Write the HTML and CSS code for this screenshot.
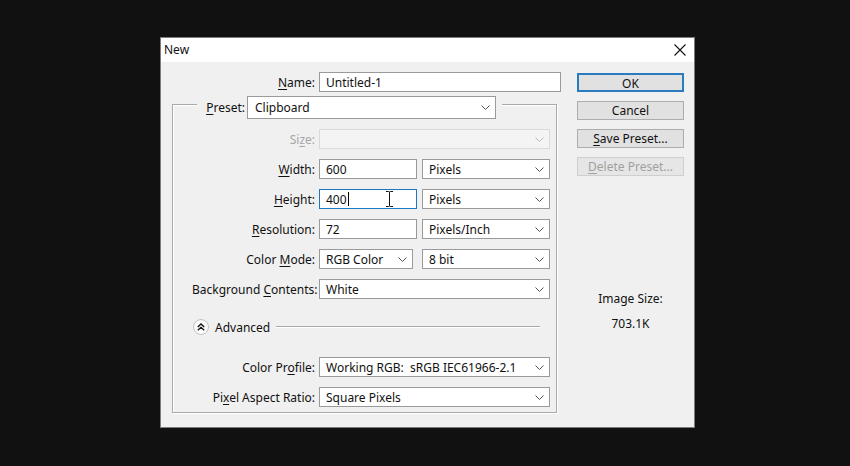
FILE: index.html
```html
<!DOCTYPE html>
<html lang="en">
<head>
    <meta charset="UTF-8">
    <title>New</title>
    <link rel="stylesheet" href="styles.css">
</head>
<body>
    <div class="dialog">
        <div class="titlebar">
            <span>New</span>
            <svg class="close" width="12" height="12" viewBox="0 0 12 12"><path d="M0.5 0.5L11.5 11.5M11.5 0.5L0.5 11.5" stroke="#111" stroke-width="1.1"/></svg>
        </div>

        <div class="dialog-body">
            <div class="form">
                <div class="row name-row">
                    <label class="lbl"><u>N</u>ame:</label>
                    <div class="field name-field">Untitled-1</div>
                </div>

                <div class="group">
                    <div class="group-head">
                        <label class="head-lbl"><u>P</u>reset:</label>
                        <div class="select preset">Clipboard<svg class="chev" width="9" height="5" viewBox="0 0 9 5"><path d="M0.5 0.5L4.5 4.5L8.5 0.5" fill="none" stroke="#555"/></svg></div>
                    </div>

                    <div class="row">
                        <label class="lbl disabled">Si<u>z</u>e:</label>
                        <div class="select full off"><span></span><svg class="chev" width="9" height="5" viewBox="0 0 9 5"><path d="M0.5 0.5L4.5 4.5L8.5 0.5" fill="none" stroke="#bbb"/></svg></div>
                    </div>

                    <div class="row">
                        <label class="lbl"><u>W</u>idth:</label>
                        <div class="field num">600</div>
                        <div class="select unit">Pixels<svg class="chev" width="9" height="5" viewBox="0 0 9 5"><path d="M0.5 0.5L4.5 4.5L8.5 0.5" fill="none" stroke="#555"/></svg></div>
                    </div>

                    <div class="row">
                        <label class="lbl"><u>H</u>eight:</label>
                        <div class="field num focus">400<span class="caret"></span>
                            <svg class="ibeam" width="7" height="16" viewBox="0 0 7 16"><path d="M0 0.5H2.5Q3.5 0.5 3.5 1.5V14.5Q3.5 15.5 2.5 15.5H0M7 0.5H4.5Q3.5 0.5 3.5 1.5M3.5 14.5Q3.5 15.5 4.5 15.5H7" fill="none" stroke="#111"/></svg>
                        </div>
                        <div class="select unit">Pixels<svg class="chev" width="9" height="5" viewBox="0 0 9 5"><path d="M0.5 0.5L4.5 4.5L8.5 0.5" fill="none" stroke="#555"/></svg></div>
                    </div>

                    <div class="row">
                        <label class="lbl"><u>R</u>esolution:</label>
                        <div class="field num">72</div>
                        <div class="select unit">Pixels/Inch<svg class="chev" width="9" height="5" viewBox="0 0 9 5"><path d="M0.5 0.5L4.5 4.5L8.5 0.5" fill="none" stroke="#555"/></svg></div>
                    </div>

                    <div class="row">
                        <label class="lbl">Color <u>M</u>ode:</label>
                        <div class="select mode">RGB Color<svg class="chev" width="9" height="5" viewBox="0 0 9 5"><path d="M0.5 0.5L4.5 4.5L8.5 0.5" fill="none" stroke="#555"/></svg></div>
                        <div class="select unit">8 bit<svg class="chev" width="9" height="5" viewBox="0 0 9 5"><path d="M0.5 0.5L4.5 4.5L8.5 0.5" fill="none" stroke="#555"/></svg></div>
                    </div>

                    <div class="row">
                        <label class="lbl">Background <u>C</u>ontents:</label>
                        <div class="select full">White<svg class="chev" width="9" height="5" viewBox="0 0 9 5"><path d="M0.5 0.5L4.5 4.5L8.5 0.5" fill="none" stroke="#555"/></svg></div>
                    </div>

                    <div class="advanced">
                        <span class="adv-btn">
                            <svg width="8" height="8" viewBox="0 0 8 8"><path d="M0.8 4L4 1L7.2 4M0.8 7.3L4 4.3L7.2 7.3" fill="none" stroke="#111" stroke-width="1.3"/></svg>
                        </span>
                        <span>Advanced</span>
                        <span class="rule"></span>
                    </div>

                    <div class="row profile-row">
                        <label class="lbl">Color Pr<u>o</u>file:</label>
                        <div class="select full">Working RGB:&nbsp; sRGB IEC61966-2.1<svg class="chev" width="9" height="5" viewBox="0 0 9 5"><path d="M0.5 0.5L4.5 4.5L8.5 0.5" fill="none" stroke="#555"/></svg></div>
                    </div>

                    <div class="row">
                        <label class="lbl">Pi<u>x</u>el Aspect Ratio:</label>
                        <div class="select full">Square Pixels<svg class="chev" width="9" height="5" viewBox="0 0 9 5"><path d="M0.5 0.5L4.5 4.5L8.5 0.5" fill="none" stroke="#555"/></svg></div>
                    </div>
                </div>
            </div>

            <div class="side">
                <button class="btn default">OK</button>
                <button class="btn">Cancel</button>
                <button class="btn"><u>S</u>ave Preset...</button>
                <button class="btn off"><u>D</u>elete Preset...</button>

                <div class="image-size">
                    <div>Image Size:</div>
                    <div>703.1K</div>
                </div>
            </div>
        </div>
    </div>
</body>
</html>
```

FILE: styles.css
```css
* {
    margin: 0;
    padding: 0;
    box-sizing: border-box;
}

body {
    background: #111111;
    font-family: 'Noto Sans', 'Open Sans', sans-serif;
    font-size: 12px;
    color: #111;
    padding: 37px 0 0 160px;
    height: 466px;
    overflow: hidden;
}

u {
    text-decoration: underline;
    text-underline-offset: 2px;
}

.dialog {
    width: 535px;
    height: 391px;
    background: #f0f0f0;
    border: 1px solid #7c7c7c;
    display: flex;
    flex-direction: column;
}

.titlebar {
    height: 24px;
    background: #ffffff;
    display: flex;
    align-items: center;
    justify-content: space-between;
    padding: 0 8px 0 3px;
}

.titlebar span {
    font-size: 12px;
    margin-top: -2px;
}

.close {
    margin-top: -1px;
}

.dialog-body {
    flex: 1;
    display: flex;
    gap: 16px;
    padding: 10px 10px 0 11px;
}

/* left column */
.form {
    width: 389px;
}

.row {
    display: flex;
    align-items: center;
    gap: 4px;
    height: 20px;
}

.lbl {
    width: 123px;
    text-align: right;
    white-space: nowrap;
}

.name-row .lbl {
    width: 143px;
}

.disabled {
    color: #a6a6a6;
}

.field,
.select {
    height: 20px;
    background: #ffffff;
    border: 1px solid #9a9a9a;
    display: flex;
    align-items: center;
    padding-left: 6px;
    white-space: nowrap;
}

.name-field {
    width: 242px;
}

.num {
    width: 98px;
    position: relative;
}

.focus {
    border-color: #1c78c4;
}

.caret {
    display: inline-block;
    width: 1px;
    height: 14px;
    background: #000;
    margin-left: 1px;
}

.ibeam {
    position: absolute;
    left: 66px;
    top: 1px;
}

.select {
    justify-content: space-between;
    padding-right: 5px;
}

.select .chev {
    flex: none;
}

.full {
    width: 231px;
}

.unit {
    width: 128px;
    margin-left: 1px;
}

.mode {
    width: 94px;
    margin-right: 4px;
}

.off {
    background: #f4f4f4;
    border-color: #dadada;
}

/* preset group box */
.group {
    width: 385px;
    margin-top: 12px;
    height: 309px;
    border: 1px solid #a9a9a9;
    box-shadow: inset 1px 1px 0 #ffffff, 1px 1px 0 #ffffff;
    padding: 0 6px 5px 19px;
    display: flex;
    flex-direction: column;
    gap: 10px;
}

.group-head {
    align-self: flex-start;
    margin: -9px 0 0 5px;
    padding: 0 6px;
    background: #f0f0f0;
    display: flex;
    align-items: center;
    gap: 2px;
}

.head-lbl {
    width: 42px;
    text-align: right;
}

.preset {
    width: 249px;
    height: 23px;
    padding-left: 7px;
}

.advanced {
    margin-top: 10px;
    height: 16px;
    display: flex;
    align-items: center;
    gap: 6px;
    padding-left: 1px;
}

.adv-btn {
    width: 16px;
    height: 16px;
    border-radius: 50%;
    border: 1px solid #c4c4c4;
    background: #fafafa;
    display: flex;
    align-items: center;
    justify-content: center;
}

.rule {
    flex: 1;
    height: 2px;
    margin-right: 10px;
    border-top: 1px solid #a9a9a9;
    border-bottom: 1px solid #ffffff;
}

.profile-row {
    margin-top: 12px;
}

/* right column */
.side {
    width: 107px;
    padding-top: 1px;
    display: flex;
    flex-direction: column;
    gap: 9px;
}

.btn {
    height: 19px;
    background: #e1e1e1;
    border: 1px solid #adadad;
    font-family: inherit;
    font-size: 12px;
    color: #111;
}

.btn.default {
    border: 2px solid #2a7bbf;
}

.btn.off {
    color: #a0a0a0;
    background: #e6e6e6;
    border-color: #cfcfcf;
}

.image-size {
    margin-top: 106px;
    display: flex;
    flex-direction: column;
    align-items: center;
    gap: 9px;
    line-height: 16px;
}
```
